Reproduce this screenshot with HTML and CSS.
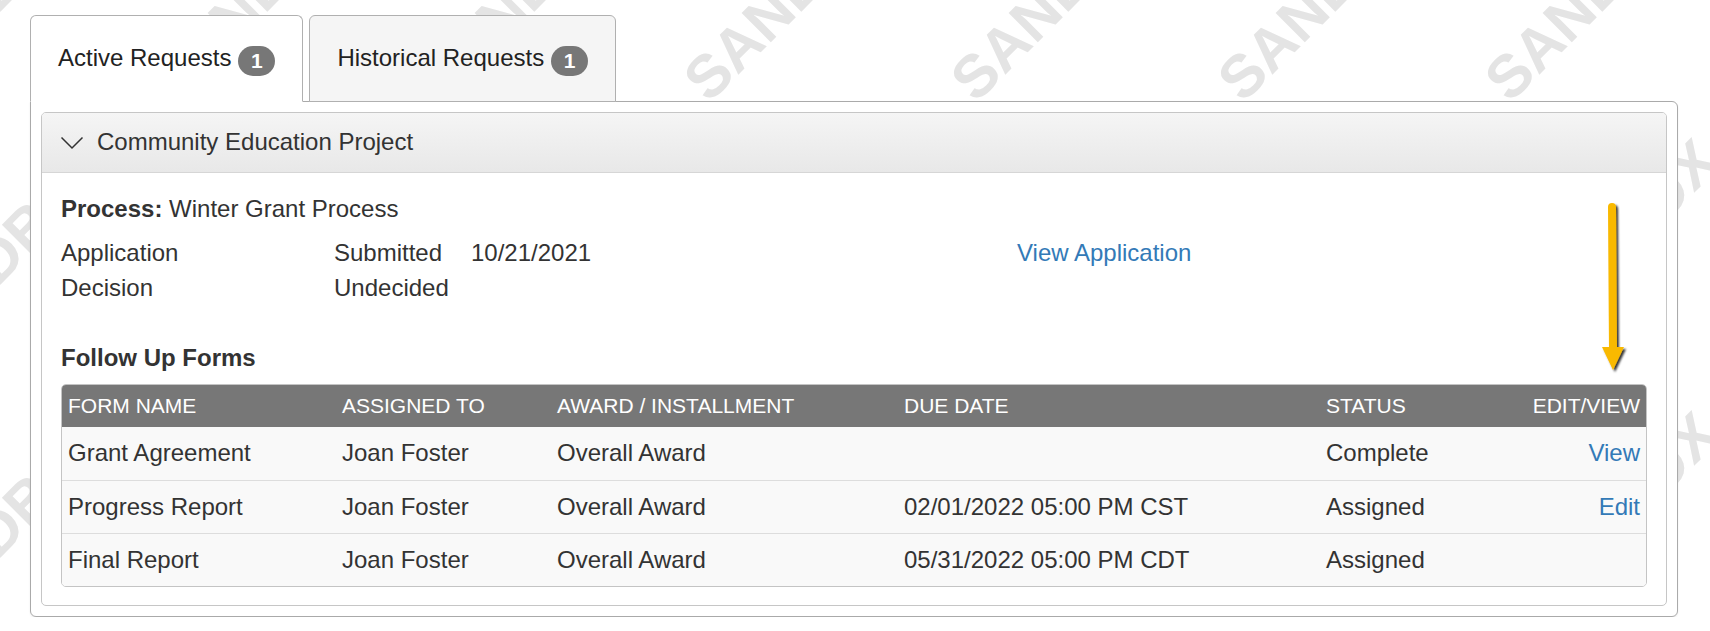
FILE: index.html
```html
<!DOCTYPE html>
<html lang="en">
<head>
    <meta charset="UTF-8">
    <meta name="viewport" content="width=device-width, initial-scale=1.0">
    <title>Requests</title>
    <link rel="stylesheet" href="styles.css">
</head>
<body>
    <svg class="watermark" width="1710" height="631" aria-hidden="true">
        <defs>
            <pattern id="sandbox" x="147" y="132" width="267" height="273" patternUnits="userSpaceOnUse">
                <text x="28" y="245" transform="rotate(-45 28 245)" class="watermark-text">SANDBOX</text>
            </pattern>
        </defs>
        <rect width="1710" height="631" fill="url(#sandbox)"/>
    </svg>

    <div class="page">
        <ul class="tabs">
            <li class="tab active">Active Requests<span class="badge">1</span></li>
            <li class="tab">Historical Requests<span class="badge">1</span></li>
        </ul>

        <div class="tab-panel">
            <div class="accordion">
                <div class="accordion-head">
                    <svg class="chevron" width="24" height="14" viewBox="0 0 24 14">
                        <polyline points="1.5,1.5 12,12 22.5,1.5" fill="none" stroke="#333" stroke-width="1.5"/>
                    </svg>
                    Community Education Project
                </div>
                <div class="accordion-body">
                    <svg class="arrow" width="34" height="180" viewBox="0 0 34 180">
                        <defs>
                            <filter id="drop" x="-50%" y="-10%" width="200%" height="120%">
                                <feDropShadow dx="2" dy="2" stdDeviation="1.2" flood-color="#000" flood-opacity="0.8"/>
                            </filter>
                        </defs>
                        <g filter="url(#drop)">
                            <line x1="13" y1="8" x2="14" y2="152" stroke="#f9b906" stroke-width="8" stroke-linecap="round"/>
                            <polygon points="3,148 25,148 14,171" fill="#f9b906"/>
                        </g>
                    </svg>

                    <p class="process"><b>Process:</b> Winter Grant Process</p>
                    <div class="details">
                        <span>Application</span>
                        <span>Submitted</span>
                        <span>10/21/2021</span>
                        <a href="#">View Application</a>
                        <span>Decision</span>
                        <span>Undecided</span>
                        <span></span>
                        <span></span>
                    </div>

                    <h4 class="forms-title">Follow Up Forms</h4>
                    <table class="forms">
                        <thead>
                            <tr>
                                <th class="c-name">Form Name</th>
                                <th class="c-assigned">Assigned To</th>
                                <th class="c-award">Award / Installment</th>
                                <th class="c-due">Due Date</th>
                                <th class="c-status">Status</th>
                                <th class="c-action">Edit/View</th>
                            </tr>
                        </thead>
                        <tbody>
                            <tr>
                                <td>Grant Agreement</td>
                                <td>Joan Foster</td>
                                <td>Overall Award</td>
                                <td></td>
                                <td>Complete</td>
                                <td class="c-action"><a href="#">View</a></td>
                            </tr>
                            <tr>
                                <td>Progress Report</td>
                                <td>Joan Foster</td>
                                <td>Overall Award</td>
                                <td>02/01/2022 05:00 PM CST</td>
                                <td>Assigned</td>
                                <td class="c-action"><a href="#">Edit</a></td>
                            </tr>
                            <tr>
                                <td>Final Report</td>
                                <td>Joan Foster</td>
                                <td>Overall Award</td>
                                <td>05/31/2022 05:00 PM CDT</td>
                                <td>Assigned</td>
                                <td class="c-action"></td>
                            </tr>
                        </tbody>
                    </table>
                </div>
            </div>
        </div>
    </div>
</body>
</html>
```

FILE: styles.css
```css
* {
    box-sizing: border-box;
}
body {
    margin: 0;
    position: relative;
    font-family: "Liberation Sans", Arial, sans-serif;
    font-size: 24px;
    line-height: 1.42857;
    color: #333;
    background: #fff;
}
a {
    color: #337ab7;
    text-decoration: none;
}
.watermark {
    position: absolute;
    left: 0;
    top: 0;
    z-index: -1;
}
.watermark-text {
    font-family: "Liberation Sans", Arial, sans-serif;
    font-size: 60px;
    font-weight: bold;
    fill: #e4e4e4;
}
.page {
    padding: 15px 32px 0 30px;
}

/* tabs */
.tabs {
    display: flex;
    list-style: none;
    margin: 0;
    padding: 0;
}
.tab {
    position: relative;
    display: flex;
    align-items: center;
    height: 87px;
    padding: 0 27px;
    margin: 0 6px -1px 0;
    border: 1px solid #b0b0b0;
    border-radius: 6px 6px 0 0;
    background: #f5f5f5;
    color: #222;
}
.tab.active {
    background: #fff;
    border-bottom-color: #fff;
    z-index: 1;
}
.badge {
    display: inline-flex;
    align-items: center;
    justify-content: center;
    width: 37px;
    height: 30px;
    margin: 4px 0 0 7px;
    border-radius: 15px;
    background: #777;
    color: #fff;
    font-size: 21px;
    font-weight: bold;
    line-height: 1;
}
.tab-panel {
    padding: 10px;
    border: 1px solid #aaa;
    border-radius: 0 6px 6px 6px;
    background: #fff;
    box-shadow: 0 1px 2px rgba(0, 0, 0, 0.08);
}

/* accordion */
.accordion {
    border: 1px solid #c6c6c6;
    border-radius: 5px;
    background: #fff;
}
.accordion-head {
    display: flex;
    align-items: center;
    height: 60px;
    padding-left: 18px;
    border-bottom: 1px solid #d6d6d6;
    border-radius: 4px 4px 0 0;
    background: linear-gradient(#f5f5f5, #e8e8e8);
    color: #333;
}
.chevron {
    margin-right: 13px;
}
.accordion-body {
    position: relative;
    padding: 19px 19px 18px;
}
.arrow {
    position: absolute;
    left: 1557px;
    top: 26px;
}
.process {
    margin: 0 0 10px;
}
.details {
    display: grid;
    grid-template-columns: 273px 137px 546px auto;
}
.forms-title {
    margin: 36px 0 9px;
    font-size: 24px;
    font-weight: bold;
    line-height: 1.42857;
}

/* follow up forms table */
.forms {
    width: 100%;
    table-layout: fixed;
    border-collapse: separate;
    border-spacing: 0;
    border: 1px solid #c4c4c4;
    border-radius: 5px;
    overflow: hidden;
}
.forms th {
    padding: 8px 6px 9px;
    background: #777;
    color: #fff;
    font-size: 21px;
    font-weight: normal;
    line-height: 1.2;
    text-align: left;
    text-transform: uppercase;
}
.forms td {
    padding: 9px 6px 9px;
    border-top: 1px solid #ddd;
    background: #f9f9f9;
    white-space: nowrap;
}
.forms tbody tr:first-child td {
    border-top: 0;
}
.forms .c-name { width: 274px; }
.forms .c-assigned { width: 215px; }
.forms .c-award { width: 347px; }
.forms .c-due { width: 422px; }
.forms .c-status { width: 200px; }
.forms .c-action { text-align: right; }
```
